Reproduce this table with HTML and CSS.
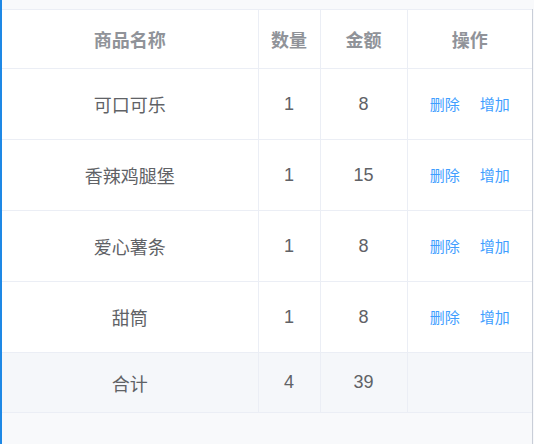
FILE: index.html
```html
<!DOCTYPE html>
<html lang="zh">
<head>
<meta charset="utf-8">
<link rel="stylesheet" href="styles.css">
</head>
<body>
<div class="page">
  <div class="wrap">
    <table class="cart">
      <colgroup>
        <col class="c-name"><col class="c-qty"><col class="c-amt"><col class="c-op">
      </colgroup>
      <thead>
        <tr class="head"><th>商品名称</th><th>数量</th><th>金额</th><th>操作</th></tr>
      </thead>
      <tbody>
        <tr><td>可口可乐</td><td>1</td><td>8</td><td class="ops"><a class="link">删除</a><a class="link">增加</a></td></tr>
        <tr><td>香辣鸡腿堡</td><td>1</td><td>15</td><td class="ops"><a class="link">删除</a><a class="link">增加</a></td></tr>
        <tr><td>爱心薯条</td><td>1</td><td>8</td><td class="ops"><a class="link">删除</a><a class="link">增加</a></td></tr>
        <tr><td>甜筒</td><td>1</td><td>8</td><td class="ops"><a class="link">删除</a><a class="link">增加</a></td></tr>
        <tr class="total"><td>合计</td><td>4</td><td>39</td><td></td></tr>
      </tbody>
    </table>
  </div>
</div>
</body>
</html>
```

FILE: styles.css
```css
html, body {
  margin: 0;
  padding: 0;
}
body {
  background: #f8f9fb;
  font-family: "Liberation Sans", "Noto Sans CJK SC", sans-serif;
  width: 534px;
  height: 444px;
  overflow: hidden;
}
.page {
  height: 444px;
  border-left: 2px solid #1e88e5;
  padding-top: 9px;
  box-sizing: border-box;
}
.wrap {
  width: 531px;
  border-right: 1px solid #c9ced8;
  height: 435px;
  box-sizing: border-box;
}
.cart {
  width: 530px;
  border-collapse: collapse;
  table-layout: fixed;
  background: #fff;
}
.c-name { width: 256px; }
.c-qty { width: 62px; }
.c-amt { width: 87px; }
.c-op { width: 125px; }
.cart th, .cart td {
  border: 1px solid #ebeef5;
  text-align: center;
  padding: 0;
  font-size: 18px;
}
.cart tr:first-child th { border-top: 1px solid #ebeef5; }
.cart th:first-child, .cart td:first-child { border-left: none; }
.cart th:last-child, .cart td:last-child { border-right: none; }
.head th {
  height: 58px;
  color: #909399;
  font-weight: bold;
}
.cart td {
  height: 70px;
  color: #606266;
}
.ops .link {
  color: #409eff;
  font-size: 15px;
  margin: 0 10px;
}
.total td {
  height: 59px;
  background: #f5f7fa;
}
```
